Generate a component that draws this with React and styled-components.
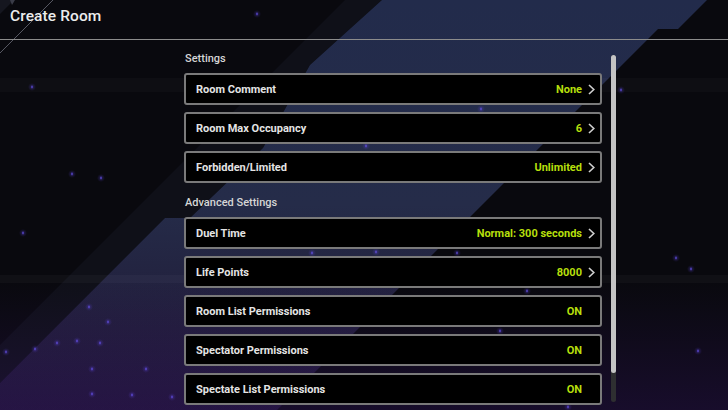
import React from 'react';
import styled, { createGlobalStyle } from 'styled-components';

const GlobalStyle = createGlobalStyle`
    * {
        box-sizing: border-box;
    }
    body {
        margin: 0;
        background: #08090d;
        font-family: Roboto, "Liberation Sans", sans-serif;
    }
`

const Screen = styled.div`
    position: relative;
    width: 728px;
    height: 410px;
    overflow: hidden;
    background: #08090d;
`

const Backdrop = styled.svg`
    position: absolute;
    inset: 0;
    z-index: 0;
`

const Layer = styled.div`
    position: relative;
    z-index: 1;
    height: 100%;
    display: flex;
    flex-direction: column;
`

const TopBar = styled.header`
    flex-shrink: 0;
    height: 40px;
    padding: 0 10px;
    border-bottom: 1px solid #8c8c8c;
`

const Title = styled.h1`
    margin: 0;
    font-size: 15.5px;
    font-weight: 500;
    line-height: 32px;
    color: #ececec;
    letter-spacing: 0.1px;
`

const Body = styled.main`
    flex: 1;
    min-height: 0;
    overflow: hidden;
    display: flex;
    padding-left: 184px;
`

const List = styled.div`
    flex-shrink: 0;
    width: 418px;
    padding-top: 6px;
    display: flex;
    flex-direction: column;
`

const SectionTitle = styled.h2`
    flex-shrink: 0;
    margin: 3px 0 4px;
    height: 20px;
    line-height: 20px;
    font-size: 11px;
    font-weight: 500;
    color: #d6d6d6;
    padding-left: 1px;
`

const Row = styled.div`
    flex-shrink: 0;
    height: 32px;
    margin-bottom: 7px;
    display: flex;
    align-items: center;
    justify-content: space-between;
    padding: 0 5px 0 10px;
    background: #000;
    border: 2px solid #7a7a7a;
    border-radius: 3px;
`

const Label = styled.span`
    font-size: 11px;
    font-weight: 700;
    color: #e4e4e4;
`

const ValueGroup = styled.span`
    display: flex;
    align-items: center;
    gap: 6px;
`

const Value = styled.span`
    font-size: 11px;
    font-weight: 700;
    color: #b6df0c;
`

const Chevron = styled.svg`
    width: 7px;
    height: 11px;
    visibility: ${({ $hidden }) => ($hidden ? 'hidden' : 'visible')};
`

const Track = styled.div`
    flex-shrink: 0;
    width: 5px;
    height: 347px;
    margin: 15px 0 0 9px;
    border-radius: 3px;
    background: #2e2f31;
    display: flex;
    flex-direction: column;
`

const Thumb = styled.div`
    height: 318px;
    border-radius: 3px;
    background: #c4c4c4;
`

const settings = [
    { label: 'Room Comment', value: 'None', arrow: true },
    { label: 'Room Max Occupancy', value: '6', arrow: true },
    { label: 'Forbidden/Limited', value: 'Unlimited', arrow: true },
]

const advanced = [
    { label: 'Duel Time', value: 'Normal: 300 seconds', arrow: true },
    { label: 'Life Points', value: '8000', arrow: true },
    { label: 'Room List Permissions', value: 'ON', arrow: false },
    { label: 'Spectator Permissions', value: 'ON', arrow: false },
    { label: 'Spectate List Permissions', value: 'ON', arrow: false },
]

// little purple sparks scattered over the backdrop
const sparks = [
    [32, 87], [72, 174], [101, 178], [257, 14], [621, 90], [481, 109],
    [23, 233], [89, 307], [108, 322], [57, 343], [77, 341], [100, 343],
    [35, 349], [6, 352], [92, 369], [146, 369], [92, 394], [132, 395],
    [172, 397], [312, 253], [676, 258], [691, 269], [698, 351], [527, 291],
    [457, 253], [376, 252], [500, 331], [568, 407], [366, 146],
]

const Background = () => (
    <Backdrop width="728" height="410" viewBox="0 0 728 410">
        <defs>
            <linearGradient id="band" x1="0" y1="0" x2="0" y2="410" gradientUnits="userSpaceOnUse">
                <stop offset="0" stopColor="#222b4b" />
                <stop offset="0.5" stopColor="#252c49" />
                <stop offset="0.8" stopColor="#211d3a" />
                <stop offset="1" stopColor="#1d1431" />
            </linearGradient>
            <linearGradient id="haze" x1="0" y1="280" x2="0" y2="410" gradientUnits="userSpaceOnUse">
                <stop offset="0" stopColor="#3a1670" stopOpacity="0" />
                <stop offset="1" stopColor="#3a1670" stopOpacity="0.3" />
            </linearGradient>
            <radialGradient id="glow">
                <stop offset="0" stopColor="#5f45e8" stopOpacity="0.35" />
                <stop offset="1" stopColor="#5f45e8" stopOpacity="0" />
            </radialGradient>
        </defs>
        <rect width="728" height="410" fill="#09090e" />
        <polygon points="0,0 14,0 0,14" fill="#15161f" />
        <polygon points="345,0 382,0 310,65 263,148 190,218 165,218 40,343 0,383 0,345" fill="#0f1018" />
        <polygon
            points="382,0 707,0 678,29 658,29 277,410 0,410 0,383 40,343 165,218 190,218 263,148 310,65"
            fill="url(#band)"
        />
        <rect y="78" width="728" height="14" fill="#ffffff" opacity="0.025" />
        <rect y="275" width="728" height="8" fill="#ffffff" opacity="0.03" />
        <rect width="728" height="410" fill="url(#haze)" />
        <line x1="53" y1="0" x2="0" y2="53" stroke="#6c6d78" strokeWidth="0.8" />
        <polygon points="10,0 15,0 12,5" fill="#3a3c48" />
        {sparks.map(([x, y], i) => (
            <g key={i}>
                <circle cx={x} cy={y} r="4" fill="url(#glow)" />
                <ellipse cx={x} cy={y} rx="0.7" ry="1.4" fill="#6a55f0" opacity="0.85" />
            </g>
        ))}
    </Backdrop>
)

const SettingRow = ({ label, value, arrow }) => (
    <Row>
        <Label>{label}</Label>
        <ValueGroup>
            <Value>{value}</Value>
            <Chevron viewBox="0 0 7 11" $hidden={!arrow}>
                <path d="M1 1 L5.8 5.5 L1 10" fill="none" stroke="#cfcfcf" strokeWidth="1.6" />
            </Chevron>
        </ValueGroup>
    </Row>
)

const App = () => {
    return (
        <Screen>
            <GlobalStyle />
            <Background />
            <Layer>
                <TopBar>
                    <Title>Create Room</Title>
                </TopBar>
                <Body>
                    <List>
                        <SectionTitle>Settings</SectionTitle>
                        {settings.map(item => <SettingRow key={item.label} {...item} />)}
                        <SectionTitle>Advanced Settings</SectionTitle>
                        {advanced.map(item => <SettingRow key={item.label} {...item} />)}
                    </List>
                    <Track>
                        <Thumb />
                    </Track>
                </Body>
            </Layer>
        </Screen>
    )
}

export default App;
